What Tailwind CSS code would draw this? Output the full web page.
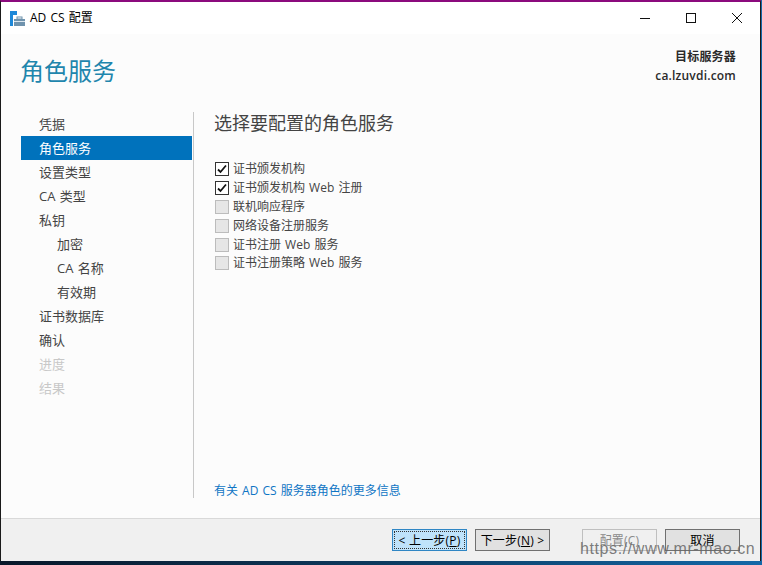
<!DOCTYPE html>
<html>
<head>
    <meta charset="utf-8">
    <title>AD CS 配置</title>
    <script src="https://cdn.jsdelivr.net/npm/@tailwindcss/browser@4"></script>
</head>
<body class="relative w-[762px] h-[565px] overflow-hidden bg-linear-to-r from-[#08182a] via-[#0b3a5f] to-[#1368a8] font-['Open_Sans','Noto_Sans_CJK_SC',sans-serif] text-[12px] [word-spacing:1px]">
    <div class="w-[761px] h-[561px] flex flex-col border-l border-r border-[#1a1a1a] border-t-2 border-t-[#8b0a7d]">
        <!-- 标题栏 -->
        <div class="h-[32px] flex items-center bg-white shrink-0">
            <svg class="ml-[9px] w-[15px] h-[15px]" viewBox="0 0 15 15">
                <rect x="0" y="0" width="7" height="4" fill="#1e88d8"/>
                <rect x="0" y="4" width="3" height="11" fill="#1e88d8"/>
                <rect x="4" y="8" width="11" height="7" fill="#6f93ad"/>
                <rect x="7" y="6" width="5" height="2" fill="none" stroke="#6f93ad"/>
                <rect x="4" y="10" width="11" height="1" fill="#dce6ee"/>
            </svg>
            <span class="ml-[5px] text-[12px] text-black">AD CS 配置</span>
            <div class="ml-auto flex items-center">
                <svg class="w-[46px] h-[30px]" viewBox="0 0 46 30"><path d="M18 15.5H28" stroke="#111" fill="none"/></svg>
                <svg class="w-[46px] h-[30px]" viewBox="0 0 46 30"><rect x="18.5" y="10.5" width="9" height="9" stroke="#111" fill="none"/></svg>
                <svg class="w-[46px] h-[30px]" viewBox="0 0 46 30"><path d="M18 10L28 20M28 10L18 20" stroke="#111" fill="none"/></svg>
            </div>
        </div>

        <!-- 内容区 -->
        <div class="flex-1 flex flex-col bg-[#fcfcfc] min-h-0">
            <div class="flex justify-between h-[78px] shrink-0">
                <h1 class="ml-[19px] mt-[17px] text-[24px] leading-[40px] text-[#1f86ad]">角色服务</h1>
                <div class="mr-[24px] mt-[13px] text-right font-semibold text-[#2a2a2a] leading-[19px] tracking-[0.2px]">
                    <div>目标服务器</div>
                    <div>ca.lzuvdi.com</div>
                </div>
            </div>

            <div class="flex flex-1 min-h-0">
                <!-- 左侧导航 -->
                <nav class="w-[173px] ml-[20px] mb-[20px] border-r border-[#c8c8c8] text-[13px] text-[#444] shrink-0 pr-px">
                    <div class="h-[24px] leading-[24px] pl-[18px]">凭据</div>
                    <div class="h-[24px] leading-[24px] pl-[18px] bg-[#0072bc] text-white">角色服务</div>
                    <div class="h-[24px] leading-[24px] pl-[18px]">设置类型</div>
                    <div class="h-[24px] leading-[24px] pl-[18px]">CA 类型</div>
                    <div class="h-[24px] leading-[24px] pl-[18px]">私钥</div>
                    <div class="h-[24px] leading-[24px] pl-[36px]">加密</div>
                    <div class="h-[24px] leading-[24px] pl-[36px]">CA 名称</div>
                    <div class="h-[24px] leading-[24px] pl-[36px]">有效期</div>
                    <div class="h-[24px] leading-[24px] pl-[18px]">证书数据库</div>
                    <div class="h-[24px] leading-[24px] pl-[18px]">确认</div>
                    <div class="h-[24px] leading-[24px] pl-[18px] text-[#c8c8c8]">进度</div>
                    <div class="h-[24px] leading-[24px] pl-[18px] text-[#c8c8c8]">结果</div>
                </nav>

                <!-- 右侧面板 -->
                <div class="flex-1 flex flex-col pl-[20px] mb-[20px]">
                    <h2 class="text-[18px] leading-[24px] mt-[-1px] text-[#444]">选择要配置的角色服务</h2>
                    <div class="mt-[25px] pl-px flex flex-col text-[#444]">
                        <label class="h-[18.8px] flex items-center gap-[4px]">
                            <svg class="w-[14px] h-[14px]" viewBox="0 0 14 14"><rect x=".5" y=".5" width="13" height="13" fill="#fff" stroke="#333"/><path d="M3 7.5L5.5 10L11 3.5" fill="none" stroke="#111" stroke-width="1.8"/></svg>
                            <span>证书颁发机构</span>
                        </label>
                        <label class="h-[18.8px] flex items-center gap-[4px]">
                            <svg class="w-[14px] h-[14px]" viewBox="0 0 14 14"><rect x=".5" y=".5" width="13" height="13" fill="#fff" stroke="#333"/><path d="M3 7.5L5.5 10L11 3.5" fill="none" stroke="#111" stroke-width="1.8"/></svg>
                            <span>证书颁发机构 Web 注册</span>
                        </label>
                        <label class="h-[18.8px] flex items-center gap-[4px]">
                            <span class="w-[14px] h-[14px] bg-[#e6e6e6] border border-[#bcbcbc]"></span>
                            <span>联机响应程序</span>
                        </label>
                        <label class="h-[18.8px] flex items-center gap-[4px]">
                            <span class="w-[14px] h-[14px] bg-[#e6e6e6] border border-[#bcbcbc]"></span>
                            <span>网络设备注册服务</span>
                        </label>
                        <label class="h-[18.8px] flex items-center gap-[4px]">
                            <span class="w-[14px] h-[14px] bg-[#e6e6e6] border border-[#bcbcbc]"></span>
                            <span>证书注册 Web 服务</span>
                        </label>
                        <label class="h-[18.8px] flex items-center gap-[4px]">
                            <span class="w-[14px] h-[14px] bg-[#e6e6e6] border border-[#bcbcbc]"></span>
                            <span>证书注册策略 Web 服务</span>
                        </label>
                    </div>
                    <a class="mt-auto mb-[-2px] text-[#0f75c4] leading-[18px]">有关 AD CS 服务器角色的更多信息</a>
                </div>
            </div>

            <!-- 底部按钮 -->
            <div class="h-[43px] shrink-0 bg-[#f0f0f0] border-t border-[#d9d9d9] flex items-center text-black tracking-[0.2px]">
                <button class="ml-[391px] w-[75px] h-[22px] pt-px border border-[#2f86c4] bg-[#bfe3fb] outline-1 outline-dotted outline-offset-[-3px] outline-[#333]">&lt; 上一步(<u>P</u>)</button>
                <button class="ml-[8px] w-[75px] h-[22px] pt-px border border-[#707070] bg-[#e1e1e1]">下一步(<u>N</u>) &gt;</button>
                <button class="ml-[32px] w-[75px] h-[22px] pt-px border border-[#bfbfbf] bg-[#f0f0f0] text-[#8a8a8a]">配置(C)</button>
                <button class="ml-[8px] w-[75px] h-[22px] pt-px border border-[#707070] bg-[#e1e1e1]">取消</button>
            </div>
        </div>
    </div>
    <!-- 水印 -->
    <div class="absolute left-[580px] top-[538px] text-[16px] leading-[22px] text-[#666]/85 font-['Liberation_Sans',sans-serif] tracking-[0.6px]">https://www.mr-mao.cn</div>
</body>
</html>
